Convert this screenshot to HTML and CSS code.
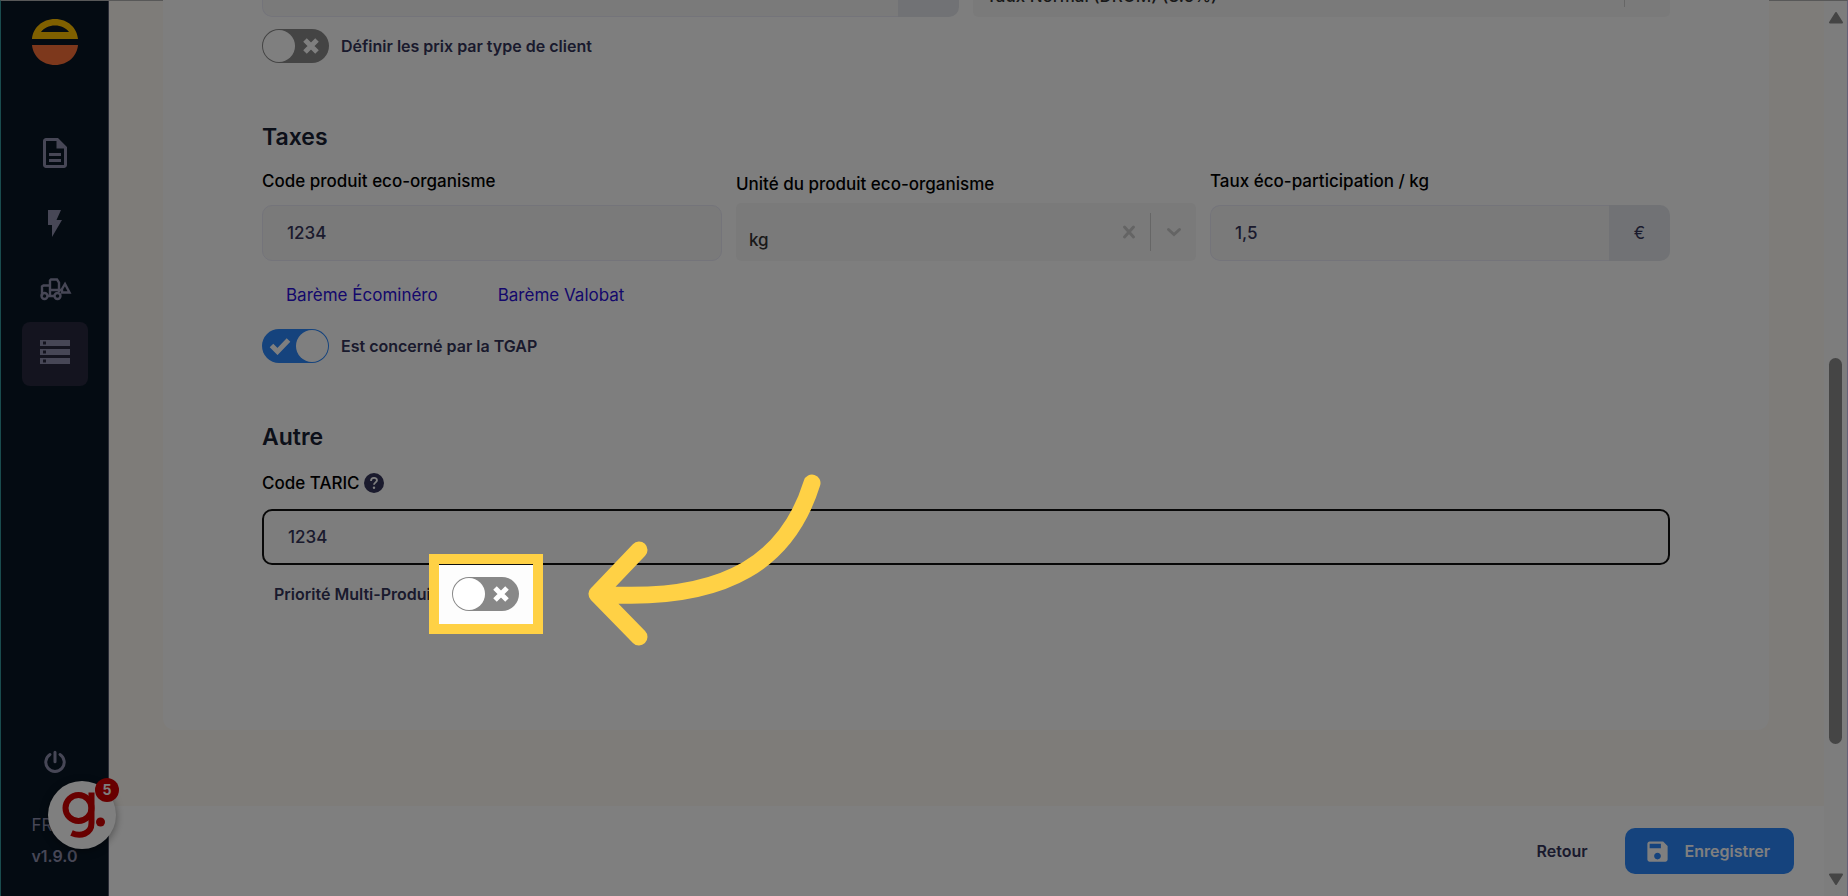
FILE: index.html
```html
<!DOCTYPE html>
<html lang="fr">
<head>
  <meta charset="UTF-8">
  <meta name="viewport" content="width=device-width, initial-scale=1.0">
  <title>Fiche produit</title>
  <link rel="stylesheet" href="styles.css">
</head>
<body>
  <div class="app">
    <aside class="sidebar">
      <a class="logo" href="#" aria-label="Accueil">
        <svg width="48" height="46" viewBox="0 0 48 46">
          <path fill="#ffc000" fill-rule="evenodd" d="M1 20C2 9 11 0 24 0s22 9 23 20zM10 13h28C35 9 30 6.500 24 6.500S13 9 10 13z"/>
          <path fill="#fb7039" d="M1 26h46c-1 11-10 20-23 20S2 37 1 26z"/>
        </svg>
      </a>
      <nav class="menu">
        <a class="menu-item" href="#" aria-label="Documents">
          <svg width="36" height="36" viewBox="0 0 24 24"><path d="M8 16h8v2H8zm0-4h8v2H8zM14 2H6c-1.100 0-2 .9-2 2v16c0 1.100.9 2 2 2h12c1.100 0 2-.9 2-2V8zm4 18H6V4h7v5h5z"/></svg>
        </a>
        <a class="menu-item" href="#" aria-label="Actions rapides">
          <svg width="36" height="36" viewBox="0 0 36 36"><path d="M11 8v15h4v12l10-17h-5.500L24 8z"/></svg>
        </a>
        <a class="menu-item" href="#" aria-label="Engins">
          <svg width="36" height="36" viewBox="0 0 36 36"><g fill="none" stroke="#8e8eac" stroke-width="2.400"><path d="M5 27V17.500l1.500-1H13M13 23V11.500l1-1h6l2 3V23M13 21h9M13 16.500V27M10 27h7M22 21h4"/><circle cx="7.500" cy="27" r="3"/><circle cx="20.500" cy="27" r="3"/><path d="M25 23.500V20l3-5 4.500 8.500z"/></g></svg>
        </a>
        <a class="menu-item active" href="#" aria-label="Catalogue">
          <svg width="36" height="36" viewBox="0 0 24 24"><path d="M2 18.700h20v-4H2zM4 15.700h2v2H4zM2 2.700v4h20v-4zm4 3H4v-2h2zM2 12.700h20v-4H2zm2-3h2v2H4z" fill-rule="evenodd"/></svg>
        </a>
      </nav>
      <div class="side-bottom">
        <button class="power" type="button" aria-label="Déconnexion">
          <svg width="24" height="24" viewBox="0 0 24 24" fill="none" stroke="#8e8eac" stroke-width="3" stroke-linecap="round"><path d="M7 4.500a9.200 9.200 0 1 0 10 0M12 2.200v9.500"/></svg>
        </button>
        <span class="lang">FR</span>
        <strong class="version">v1.9.0</strong>
      </div>
      <button class="chat" type="button" aria-label="Aide">
        <svg width="68" height="68" viewBox="0 0 68 68" fill="none" stroke="#d00000" stroke-width="6">
          <circle cx="30.500" cy="27" r="13"/>
          <path d="M43.500 11.500V42c0 11-11 14-20 10" stroke-linejoin="round"/>
          <circle cx="52.500" cy="41" r="4.500" fill="#d00000" stroke="none"/>
        </svg>
        <span class="badge">5</span>
      </button>
    </aside>

    <main class="main">
      <div class="content">
        <form class="card" id="produit">
          <div class="row two">
            <div class="group">
              <input class="input" type="text" aria-label="Prix">
              <span class="addon">€</span>
            </div>
            <div class="select">
              <select aria-label="Taux de TVA"><option>Taux Normal (DROM) (8.5%)</option></select>
              <span class="sep"></span>
              <svg class="chevron" width="20" height="20" viewBox="0 0 20 20"><path d="M4.500 7.500l5.500 5 5.500-5"/></svg>
            </div>
          </div>
          <label class="switch-line">
            <input class="switch" type="checkbox">
            <span class="track"><svg class="mark" width="18" height="18" viewBox="0 0 18 18"><path d="M3 3l12 12M15 3L3 15"/></svg></span>
            Définir les prix par type de client
          </label>

          <h2>Taxes</h2>
          <div class="row three">
            <div class="field">
              <label for="code">Code produit eco-organisme</label>
              <input class="input" id="code" type="text" value="1234">
            </div>
            <div class="field tight">
              <label for="unite">Unité du produit eco-organisme</label>
              <div class="select">
                <select id="unite"><option>kg</option></select>
                <button class="clear" type="button" aria-label="Effacer"><svg width="20" height="20" viewBox="0 0 20 20"><path d="M5.500 5l9 10M14.500 5l-9 10"/></svg></button>
                <span class="sep"></span>
                <svg class="chevron" width="20" height="20" viewBox="0 0 20 20"><path d="M4.500 7.500l5.500 5 5.500-5"/></svg>
              </div>
            </div>
            <div class="field">
              <label for="taux">Taux éco-participation / kg</label>
              <div class="group">
                <input class="input" id="taux" type="text" value="1,5">
                <span class="addon">€</span>
              </div>
            </div>
          </div>
          <div class="links">
            <a href="#">Barème Écominéro</a>
            <a href="#">Barème Valobat</a>
          </div>
          <label class="switch-line">
            <input class="switch" type="checkbox" checked>
            <span class="track"><svg class="mark" width="22" height="18" viewBox="0 0 22 18"><path d="M2.500 8.500l6 6L19.500 3"/></svg></span>
            Est concerné par la TGAP
          </label>

          <h2>Autre</h2>
          <div class="field taric">
            <label for="taric">Code TARIC
              <svg width="20" height="20" viewBox="0 0 20 20"><circle cx="10" cy="10" r="10" fill="#34355a"/><path d="M7 8c0-4 6-4 6-.7 0 2-3 2.200-3 4.500" fill="none" stroke="#fff" stroke-width="1.800"/><circle cx="10" cy="14.700" r="1.200" fill="#fff"/></svg>
            </label>
            <input class="input focused" id="taric" type="text" value="1234">
          </div>
          <div class="priority">
            <label for="priorite">Priorité Multi-Produit</label>
            <div class="target">
              <label class="switch-line">
                <input class="switch" id="priorite" type="checkbox">
                <span class="track"><svg class="mark" width="18" height="18" viewBox="0 0 18 18"><path d="M3 3l12 12M15 3L3 15"/></svg></span>
              </label>
              <div class="spotlight"></div>
              <svg class="arrow" width="240" height="176" viewBox="0 0 240 176"><path d="M225 10C202 84 144 131 10 121M52 77L10 121l42 43"/></svg>
            </div>
          </div>
        </form>
      </div>
      <footer class="actions">
        <button class="back" type="button">Retour</button>
        <button class="save" type="submit" form="produit">
          <svg width="27" height="27" viewBox="0 0 24 24"><path fill="#fff" d="M17 3H5c-1.100 0-2 .9-2 2v14c0 1.100.9 2 2 2h14c1.100 0 2-.9 2-2V7zm-5 16c-1.660 0-3-1.340-3-3s1.340-3 3-3 3 1.340 3 3-1.340 3-3 3zm3-10H5V5h10z"/></svg>
          Enregistrer
        </button>
      </footer>
    </main>

    <div class="scrollbar" aria-hidden="true">
      <svg width="14" height="12" viewBox="0 0 14 12"><path d="M7 1L1 10.500h12z"/></svg>
      <div class="rail"><div class="thumb"></div></div>
      <svg width="14" height="12" viewBox="0 0 14 12"><path d="M7 11L1 1.500h12z"/></svg>
    </div>
  </div>
</body>
</html>
```
FILE: styles.css
```css
* {
  box-sizing: border-box;
}
body {
  margin: 0;
  font-family: Inter, sans-serif;
  font-size: 17px;
  line-height: 24px;
  color: #34355a;
  overflow: hidden;
}
button {
  border: none;
  padding: 0;
  background: none;
  font: inherit;
  color: inherit;
  cursor: pointer;
}
svg {
  display: block;
}
.app {
  display: flex;
  height: 100vh;
  border-top: 1px solid #b0b0b0;
  border-left: 1px solid #35989c;
  border-right: 1px solid #c8c0f0;
}

/* sidebar */
.sidebar {
  position: relative;
  z-index: 1;
  display: flex;
  flex-direction: column;
  align-items: center;
  flex: 0 0 108px;
  padding: 18px 0 28px;
  background: #081624;
  border-right: 1px solid #54586c;
  color: #8e8eac;
}
.menu {
  display: flex;
  flex-direction: column;
  gap: 3px;
  margin-top: 56px;
}
.menu-item {
  display: flex;
  align-items: center;
  justify-content: center;
  width: 66px;
  height: 64px;
  border-radius: 8px;
}
.menu-item.active {
  background: #28283e;
}
.menu-item svg {
  fill: #8e8eac;
}
.side-bottom {
  display: flex;
  flex-direction: column;
  margin-top: auto;
}
.power {
  align-self: center;
  margin-bottom: 39px;
}
.lang {
  margin-bottom: 7px;
}
.version {
  font-size: 16px;
  font-weight: 600;
}
.chat {
  position: absolute;
  left: 47px;
  bottom: 47px;
  width: 68px;
  height: 68px;
  border-radius: 50%;
  background: #fff;
  box-shadow: 0 2px 8px rgba(0, 0, 0, 0.4);
}
.badge {
  position: absolute;
  top: -3px;
  right: -3px;
  width: 24px;
  height: 24px;
  border-radius: 50%;
  background: #d00000;
  color: #fff;
  font-size: 14px;
  font-weight: 700;
}

/* page */
.main {
  display: flex;
  flex-direction: column;
  flex: 1;
  min-width: 0;
}
.content {
  flex: 1;
  min-height: 0;
  padding: 0 55px 0 54px;
  background: #fcf8f2;
}
/* the form is scrolled, its first row is cut by the window */
.card {
  margin-top: -101px;
  padding: 59px 99px 119px;
  border-radius: 12px;
  background: #fdfdfd;
}
h2 {
  margin: 59px 0 17px;
  font-size: 23px;
  line-height: 30px;
  font-weight: 600;
  color: #182033;
}
.row {
  display: grid;
  gap: 14px;
  align-items: end;
}
.two {
  grid-template-columns: repeat(2, 1fr);
  margin-bottom: 12px;
}
.three {
  grid-template-columns: repeat(3, 1fr);
}
.field {
  display: flex;
  flex-direction: column;
  gap: 12px;
}
.field.tight {
  gap: 7px;
}
.field > label {
  display: flex;
  align-items: center;
  gap: 4px;
  font-weight: 500;
  color: #000;
}
.input {
  width: 100%;
  height: 56px;
  padding: 0 24px;
  border: 1px solid #e8e8f4;
  border-radius: 10px;
  background: #f5f5f5;
  font: inherit;
  font-weight: 500;
  color: #34355a;
}
.input.focused {
  border: 2px solid #101010;
  background: #fafafa;
}
.group {
  display: flex;
}
.group .input {
  flex: 1;
  min-width: 0;
  border-right: none;
  border-radius: 10px 0 0 10px;
}
.addon {
  display: flex;
  align-items: center;
  justify-content: center;
  width: 61px;
  border-radius: 0 10px 10px 0;
  background: #e2e5ea;
}
.select {
  display: grid;
  grid-template-columns: 1fr 20px 11px 1px 45px;
  align-items: center;
  height: 58px;
  border-radius: 5px;
  background: #f5f5f5;
}
.select select {
  grid-area: 1 / 1 / 2 / 6;
  height: 58px;
  padding: 16px 13px 0;
  border: none;
  background: none;
  appearance: none;
  font: inherit;
  font-weight: 500;
  color: #333;
}
.clear {
  grid-area: 1 / 2;
}
.sep {
  grid-area: 1 / 4;
  height: 38px;
  background: #ccc;
}
.chevron {
  grid-area: 1 / 5;
  justify-self: center;
}
.select path {
  fill: none;
  stroke: #c8c8c8;
  stroke-width: 3;
  stroke-linecap: round;
}
.links {
  display: flex;
  gap: 60px;
  margin: 22px 0;
  padding-left: 24px;
}
.links a {
  color: #2a10d8;
  text-decoration: none;
}

/* switches */
.switch-line {
  display: flex;
  align-items: center;
  gap: 12px;
  font-size: 16px;
  font-weight: 600;
}
.switch {
  position: absolute;
  opacity: 0;
}
.track {
  display: flex;
  align-items: center;
  justify-content: space-between;
  width: 67px;
  height: 34px;
  padding: 0 9px 0 1px;
  border-radius: 17px;
  background: #888;
}
.track::before {
  content: "";
  width: 32px;
  height: 32px;
  border-radius: 50%;
  background: #fff;
}
.mark {
  fill: none;
  stroke: #fff;
  stroke-width: 5;
}
.switch:checked + .track {
  flex-direction: row-reverse;
  padding: 0 1px 0 7px;
  background: #2a86fa;
}
.taric {
  gap: 14px;
  padding-top: 2px;
}
.priority {
  display: flex;
  align-items: center;
  gap: 16px;
  margin-top: 12px;
  padding-left: 12px;
  font-size: 16px;
  font-weight: 600;
}

/* guided tour: dims the page around its target */
.target {
  position: relative;
  z-index: 2;
}
.spotlight {
  position: absolute;
  top: -23px;
  left: -23px;
  width: 114px;
  height: 80px;
  border: 10px solid #ffd145;
  box-shadow: 0 0 0 3000px rgba(0, 0, 0, 0.5);
  pointer-events: none;
}
.arrow {
  position: absolute;
  top: -104px;
  left: 135px;
  fill: none;
  stroke: #ffd145;
  stroke-width: 17;
  stroke-linecap: round;
  stroke-linejoin: round;
  pointer-events: none;
}

.actions {
  display: flex;
  align-items: center;
  justify-content: flex-end;
  gap: 37px;
  height: 90px;
  padding: 0 30px;
  background: #fff;
  font-size: 16px;
  font-weight: 600;
}
.save {
  display: flex;
  align-items: center;
  gap: 14px;
  height: 46px;
  padding: 0 24px 0 19px;
  border-radius: 10px;
  background: #2a86fa;
  color: #fff;
}
.scrollbar {
  display: flex;
  flex-direction: column;
  align-items: center;
  flex: 0 0 23px;
  padding: 11px 0;
  background: #fafafa;
}
.scrollbar path {
  fill: #8a8a8a;
  stroke: #8a8a8a;
  stroke-width: 2;
  stroke-linejoin: round;
}
.rail {
  flex: 1;
  padding-top: 334px;
}
.thumb {
  width: 13px;
  height: 75%;
  border-radius: 7px;
  background: #8a8a8a;
}
```
